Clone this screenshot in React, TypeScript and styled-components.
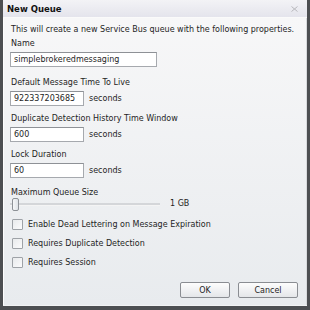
import React, { useState } from 'react';
import styled, { createGlobalStyle } from 'styled-components';

const Global = createGlobalStyle`
  html, body {
    margin: 0;
    padding: 0;
    background: #4d4f52;
  }
  body {
    font-family: "DejaVu Sans", "Liberation Sans", sans-serif;
    font-size: 8px;
    line-height: 10px;
    color: #1e1e1e;
  }
`;

const Frame = styled.div`
  width: 310px;
  height: 310px;
  box-sizing: border-box;
  padding: 0 3px 4px 3px;
  background: #4d4f52;
  display: flex;
  flex-direction: column;
`;

const Header = styled.div`
  height: 18px;
  box-sizing: border-box;
  display: flex;
  align-items: center;
  justify-content: space-between;
  padding: 1px 9px 0 4px;
  background: linear-gradient(to bottom, #f3f3f6, #e4e4ec);
  border-bottom: 1px solid #fafafa;
`;

const HeaderTitle = styled.span`
  font-weight: bold;
  font-size: 8.5px;
  color: #111;
`;

const CloseIcon = styled.svg`
  width: 7px;
  height: 6px;
`;

const Body = styled.div`
  flex: 1;
  display: flex;
  flex-direction: column;
  padding: 7px 8px 0 6px;
  background: linear-gradient(to bottom, #f7f7f8, #e8ebee);
  border-left: 1px solid #fdfdfd;
  border-right: 1px solid #d8dadd;
`;

const Intro = styled.div`
  padding-left: 1px;
  margin-bottom: 4px;
`;

const Label = styled.div<{ $gap?: number }>`
  padding-left: 1px;
  margin-bottom: ${p => p.$gap ?? 3}px;
`;

const Field = styled.div<{ $gap: number }>`
  margin-bottom: ${p => p.$gap}px;
`;

const Row = styled.div`
  display: flex;
  align-items: center;
  gap: 5px;
`;

const TextBox = styled.input<{ $w: number }>`
  box-sizing: border-box;
  width: ${p => p.$w}px;
  height: 15px;
  padding: 0 3px;
  border: 1px solid #a6a9ae;
  border-top-color: #8e9196;
  background: #fff;
  font-family: inherit;
  font-size: 8px;
  color: #1e1e1e;
  outline: none;
`;

const SliderRow = styled.div`
  display: flex;
  align-items: center;
  gap: 10px;
  margin-bottom: 5px;
`;

const Track = styled.div`
  position: relative;
  width: 150px;
  height: 12px;
  display: flex;
  align-items: center;
`;

const TrackLine = styled.div`
  flex: 1;
  height: 2px;
  background: #d4d6d9;
  border-bottom: 1px solid #f4f4f4;
`;

const Thumb = styled.div`
  position: absolute;
  left: 2px;
  top: 0;
  width: 5px;
  height: 11px;
  border: 1px solid #8d9196;
  border-radius: 2px;
  background: linear-gradient(to right, #f6f7f8, #dfe3e7);
`;

const CheckRow = styled.label`
  display: flex;
  align-items: center;
  gap: 5px;
  height: 19px;
  padding-left: 2px;
`;

const Box = styled.span`
  box-sizing: border-box;
  width: 11px;
  height: 11px;
  border: 1px solid #9ea2a7;
  border-radius: 1px;
  background: linear-gradient(to bottom right, #e8eaec, #fbfbfc);
`;

const Buttons = styled.div`
  margin-top: auto;
  display: flex;
  justify-content: flex-end;
  gap: 8px;
  padding-bottom: 7px;
`;

const Button = styled.button<{ $w: number }>`
  width: ${p => p.$w}px;
  height: 16px;
  border: 1px solid #8a8d92;
  border-radius: 2px;
  background: linear-gradient(to bottom, #fdfdfd, #e4e6e9);
  font-family: inherit;
  font-size: 8px;
  color: #1e1e1e;
  padding: 0;
`;

const BottomEdge = styled.div`
  height: 1px;
  background: #f2f3f4;
`;

const checks = [
  'Enable Dead Lettering on Message Expiration',
  'Requires Duplicate Detection',
  'Requires Session',
];

const numeric = [
  { label: 'Default Message Time To Live', value: '922337203685', gap: 8 },
  { label: 'Duplicate Detection History Time Window', value: '600', gap: 8 },
  { label: 'Lock Duration', value: '60', gap: 10 },
];

export default function App() {
  const [name, setName] = useState('simplebrokeredmessaging');
  return (
    <>
      <Global />
      <Frame>
        <Header>
          <HeaderTitle>New Queue</HeaderTitle>
          <CloseIcon viewBox="0 0 7 6">
            <path d="M0.5 0.5 L6.5 5.5 M6.5 0.5 L0.5 5.5" stroke="#b8b8bc" strokeWidth="1" />
          </CloseIcon>
        </Header>
        <Body>
          <Intro>This will create a new Service Bus queue with the following properties.</Intro>
          <Field $gap={11}>
            <Label>Name</Label>
            <TextBox $w={147} value={name} onChange={e => setName(e.target.value)} />
          </Field>
          {numeric.map(f => (
            <Field key={f.label} $gap={f.gap}>
              <Label>{f.label}</Label>
              <Row>
                <TextBox $w={74} defaultValue={f.value} />
                <span>seconds</span>
              </Row>
            </Field>
          ))}
          <Label $gap={0}>Maximum Queue Size</Label>
          <SliderRow>
            <Track>
              <TrackLine />
              <Thumb />
            </Track>
            <span>1 GB</span>
          </SliderRow>
          {checks.map(c => (
            <CheckRow key={c}>
              <Box />
              <span>{c}</span>
            </CheckRow>
          ))}
          <Buttons>
            <Button $w={50}>OK</Button>
            <Button $w={60}>Cancel</Button>
          </Buttons>
        </Body>
        <BottomEdge />
      </Frame>
    </>
  );
}
